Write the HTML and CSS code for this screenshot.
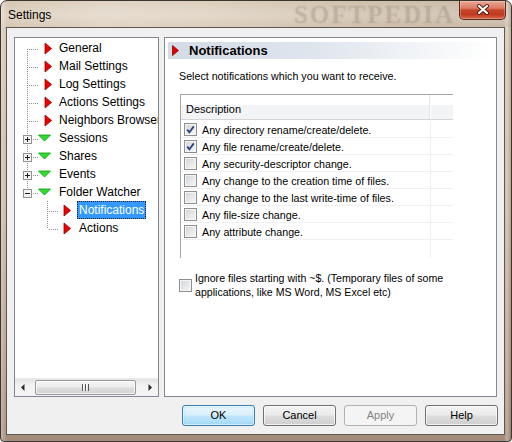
FILE: index.html
```html
<!DOCTYPE html>
<html>
<head>
<meta charset="utf-8">
<link rel="stylesheet" href="styles.css">
</head>
<body>
<div class="window">
  <div class="titlebar">
    <span class="title">Settings</span>
    <span class="watermark">SOFTPEDIA</span>
    <div class="close">
      <svg width="14" height="11" viewBox="0 0 14 11"><path d="M3 2 L11 9 M11 2 L3 9" stroke="#4a1d12" stroke-width="4" stroke-linecap="round"/><path d="M3 2 L11 9 M11 2 L3 9" stroke="#fff" stroke-width="2.2" stroke-linecap="round"/></svg>
    </div>
  </div>
  <div class="client">
    <div class="panes">
      <div class="tree">
        <div class="tree-rows">
          <div class="node"><span class="guide first"></span><span class="icon"><svg width="16" height="18"><polygon points="7,4 13.5,9.5 7,15" class="tri-red"/></svg></span><span class="label">General</span></div>
          <div class="node"><span class="guide mid"></span><span class="icon"><svg width="16" height="18"><polygon points="7,4 13.5,9.5 7,15" class="tri-red"/></svg></span><span class="label">Mail Settings</span></div>
          <div class="node"><span class="guide mid"></span><span class="icon"><svg width="16" height="18"><polygon points="7,4 13.5,9.5 7,15" class="tri-red"/></svg></span><span class="label">Log Settings</span></div>
          <div class="node"><span class="guide mid"></span><span class="icon"><svg width="16" height="18"><polygon points="7,4 13.5,9.5 7,15" class="tri-red"/></svg></span><span class="label">Actions Settings</span></div>
          <div class="node"><span class="guide mid"></span><span class="icon"><svg width="16" height="18"><polygon points="7,4 13.5,9.5 7,15" class="tri-red"/></svg></span><span class="label">Neighbors Browser</span></div>
          <div class="node"><span class="guide mid"><svg class="box" width="9" height="9"><rect x="0.5" y="0.5" width="8" height="8" fill="#f4f4f4" stroke="#919191"/><path d="M2 4.5 H7 M4.5 2 V7" stroke="#1f1f1f"/></svg></span><span class="icon"><svg width="16" height="18"><polygon points="0.5,6 12.5,6 6.5,12" class="tri-green"/></svg></span><span class="label">Sessions</span></div>
          <div class="node"><span class="guide mid"><svg class="box" width="9" height="9"><rect x="0.5" y="0.5" width="8" height="8" fill="#f4f4f4" stroke="#919191"/><path d="M2 4.5 H7 M4.5 2 V7" stroke="#1f1f1f"/></svg></span><span class="icon"><svg width="16" height="18"><polygon points="0.5,6 12.5,6 6.5,12" class="tri-green"/></svg></span><span class="label">Shares</span></div>
          <div class="node"><span class="guide mid"><svg class="box" width="9" height="9"><rect x="0.5" y="0.5" width="8" height="8" fill="#f4f4f4" stroke="#919191"/><path d="M2 4.5 H7 M4.5 2 V7" stroke="#1f1f1f"/></svg></span><span class="icon"><svg width="16" height="18"><polygon points="0.5,6 12.5,6 6.5,12" class="tri-green"/></svg></span><span class="label">Events</span></div>
          <div class="node"><span class="guide last"><svg class="box" width="9" height="9"><rect x="0.5" y="0.5" width="8" height="8" fill="#f4f4f4" stroke="#919191"/><path d="M2 4.5 H7" stroke="#1f1f1f"/></svg></span><span class="icon"><svg width="16" height="18"><polygon points="0.5,6 12.5,6 6.5,12" class="tri-green"/></svg></span><span class="label">Folder Watcher</span></div>
          <div class="node"><span class="indent"></span><span class="guide mid"></span><span class="icon"><svg width="16" height="18"><polygon points="6,4 12.5,9.5 6,15" class="tri-red"/></svg></span><span class="label selected">Notifications</span></div>
          <div class="node"><span class="indent"></span><span class="guide last"></span><span class="icon"><svg width="16" height="18"><polygon points="6,4 12.5,9.5 6,15" class="tri-red"/></svg></span><span class="label">Actions</span></div>
        </div>
        <div class="hscroll">
          <span class="sbtn"><svg width="17" height="17"><polygon points="9.5,5 9.5,12 6,8.5" fill="#2a2a2a"/></svg></span>
          <span class="track"><span class="thumb"><span class="grip"></span></span></span>
          <span class="sbtn"><svg width="17" height="17"><polygon points="7.5,5 7.5,12 11,8.5" fill="#2a2a2a"/></svg></span>
        </div>
      </div>
      <div class="page">
        <div class="band">
          <svg width="7" height="11"><polygon points="0.5,0.5 6.5,5.5 0.5,10.5" fill="#e00000" stroke="#a00000" stroke-width="0.8"/></svg>
          <span class="band-title">Notifications</span>
        </div>
        <p class="intro">Select notifications which you want to receive.</p>
        <div class="list">
          <div class="list-head">
            <span class="hcell">Description</span>
            <span class="hcell rest"></span>
          </div>
          <div class="rows">
            <div class="row"><span class="cell"><span class="cb"><svg width="11" height="11"><path d="M2.2 5.6 L4.4 8.2 L8.8 2.4" stroke="#2f437c" stroke-width="1.8" fill="none"/></svg></span><span class="txt">Any directory rename/create/delete.</span></span><span class="cell2"></span></div>
            <div class="row"><span class="cell"><span class="cb"><svg width="11" height="11"><path d="M2.2 5.6 L4.4 8.2 L8.8 2.4" stroke="#2f437c" stroke-width="1.8" fill="none"/></svg></span><span class="txt">Any file rename/create/delete.</span></span><span class="cell2"></span></div>
            <div class="row"><span class="cell"><span class="cb"></span><span class="txt">Any security-descriptor change.</span></span><span class="cell2"></span></div>
            <div class="row"><span class="cell"><span class="cb"></span><span class="txt">Any change to the creation time of files.</span></span><span class="cell2"></span></div>
            <div class="row"><span class="cell"><span class="cb"></span><span class="txt">Any change to the last write-time of files.</span></span><span class="cell2"></span></div>
            <div class="row"><span class="cell"><span class="cb"></span><span class="txt">Any file-size change.</span></span><span class="cell2"></span></div>
            <div class="row"><span class="cell"><span class="cb"></span><span class="txt">Any attribute change.</span></span><span class="cell2"></span></div>
            <div class="row empty"><span class="cell"></span><span class="cell2"></span></div>
          </div>
        </div>
        <div class="ignore">
          <span class="cb"></span>
          <span class="ignore-txt">Ignore files starting with ~$. (Temporary files of some<br>applications, like MS Word, MS Excel etc)</span>
        </div>
      </div>
    </div>
    <div class="buttons">
      <span class="btn default">OK</span>
      <span class="btn">Cancel</span>
      <span class="btn disabled">Apply</span>
      <span class="btn">Help</span>
    </div>
  </div>
</div>
</body>
</html>
```

FILE: styles.css
```css
html, body {
  margin: 0;
  padding: 0;
}
body {
  width: 512px;
  height: 442px;
  overflow: hidden;
  font-family: "Liberation Sans", Arial, sans-serif;
  background: #fff;
}
.window {
  box-sizing: border-box;
  width: 512px;
  height: 442px;
  border: 1px solid #3c3633;
  border-radius: 7px 7px 4px 4px;
  overflow: hidden;
  padding: 0 6px 6px 5px;
  display: flex;
  flex-direction: column;
  background:
    linear-gradient(to right, rgba(255,255,255,0.35), rgba(255,255,255,0) 6px, rgba(255,255,255,0) 503px, rgba(255,255,255,0.3) 506px, rgba(80,60,50,0.15)),
    linear-gradient(to bottom, #d6c6b1 0, #dfd3c3 14px, #d4c3ae 28px, #c8b5a2 45%, #b49c8b 80%, #a48a79 100%);
}
.titlebar {
  height: 26px;
  display: flex;
  align-items: flex-start;
  background: linear-gradient(to right, rgba(255,255,255,0) 0, rgba(255,255,255,0.25) 20%, rgba(255,255,255,0.15) 40%, rgba(0,0,0,0.03) 70%, rgba(0,0,0,0.06) 100%);
  margin: 0 -6px 0 -5px;
  padding: 0 6px 0 5px;
}
.title {
  font-size: 12px;
  line-height: 16px;
  margin: 6px 0 0 2px;
  color: #000;
}
.watermark {
  margin-left: auto;
  margin-right: 4px;
  margin-top: 1px;
  font-family: "Liberation Serif", serif;
  font-weight: bold;
  font-size: 25px;
  line-height: 25px;
  letter-spacing: 2px;
  color: rgba(110, 90, 70, 0.11);
  text-shadow: 0 0 2px rgba(110, 90, 70, 0.15);
}
.close {
  box-sizing: border-box;
  width: 47px;
  height: 19px;
  margin-right: -1px;
  border: 1px solid #5a2a20;
  border-top: none;
  border-radius: 0 0 5px 5px;
  background: linear-gradient(to bottom, #e9a898 0, #dc7a62 40%, #c8452a 50%, #c23a20 75%, #d56a4d 100%);
  box-shadow: inset 0 0 0 1px rgba(255,255,255,0.25);
  display: flex;
  align-items: center;
  justify-content: center;
}
.close svg {
  margin-top: -1px;
}
.client {
  flex: 1;
  border: 1px solid #5e5752;
  background: #f0f0f0;
  padding: 9px 7px 8px 7px;
  display: flex;
  flex-direction: column;
  gap: 8px;
}
.panes {
  height: 360px;
  display: flex;
  gap: 5px;
}
.tree {
  box-sizing: border-box;
  width: 145px;
  height: 360px;
  border: 1px solid #828790;
  background: #fff;
  display: flex;
  flex-direction: column;
}
.tree-rows {
  flex: 1;
  overflow: hidden;
  padding-top: 1px;
}
.node {
  display: flex;
  align-items: flex-start;
  height: 18px;
  white-space: nowrap;
}
.indent {
  width: 20px;
  height: 18px;
  flex: none;
}
.guide {
  --dv: repeating-linear-gradient(to bottom, #8c8c8c 0 1px, transparent 1px 2px);
  --dh: repeating-linear-gradient(to right, #8c8c8c 0 1px, transparent 1px 2px);
  width: 23px;
  height: 18px;
  flex: none;
  display: flex;
  align-items: flex-start;
}
.guide.mid {
  background: var(--dv) 12px 0 / 1px 18px no-repeat, var(--dh) 14px 10px / 9px 1px no-repeat;
}
.guide.first {
  background: var(--dv) 12px 10px / 1px 8px no-repeat, var(--dh) 14px 10px / 9px 1px no-repeat;
}
.guide.last {
  background: var(--dv) 12px 0 / 1px 10px no-repeat, var(--dh) 14px 10px / 9px 1px no-repeat;
}
.box {
  margin: 6px 0 0 8px;
  display: block;
}
.icon {
  width: 16px;
  height: 18px;
  flex: none;
}
.icon svg {
  display: block;
}
.tri-red {
  fill: #ee0000;
  stroke: #9c0000;
  stroke-width: 0.8;
}
.tri-green {
  fill: #2fdc2f;
  stroke: #0b9a0b;
  stroke-width: 0.8;
}
.label {
  margin-left: 3px;
  padding: 0 1px;
  border: 1px solid transparent;
  font-size: 12px;
  line-height: 16px;
  color: #000;
}
.label.selected {
  background: #3399ff;
  color: #fff;
  border: 1px dotted #1a1a1a;
}
.hscroll {
  height: 17px;
  flex: none;
  display: flex;
  background: linear-gradient(to bottom, #e3e3e3, #f3f3f3 40%, #f3f3f3);
  border-top: 1px solid #ececec;
}
.sbtn {
  width: 17px;
  height: 17px;
  flex: none;
}
.sbtn svg {
  display: block;
}
.track {
  flex: 1;
  display: flex;
  align-items: center;
}
.thumb {
  box-sizing: border-box;
  margin-left: 3px;
  width: 101px;
  height: 15px;
  border: 1px solid #999;
  border-radius: 2px;
  background: linear-gradient(to bottom, #f6f6f6 0, #ececec 45%, #dcdcdc 55%, #d3d3d3 100%);
  box-shadow: inset 0 0 0 1px rgba(255,255,255,0.7);
  display: flex;
  align-items: center;
  justify-content: center;
}
.grip {
  width: 7px;
  height: 7px;
  background: repeating-linear-gradient(to right, #555 0 1px, #fff 1px 2px, transparent 2px 3px);
}
.page {
  box-sizing: border-box;
  width: 333px;
  height: 360px;
  border: 1px solid #828790;
  background: #fff;
  padding-top: 4px;
}
.band {
  margin: 0 5px 0 3px;
  height: 17px;
  display: flex;
  align-items: center;
  padding-left: 4px;
  background: linear-gradient(to right, #d3dbe6 0, #dfe5ed 45%, #f3f5f8 80%, #ffffff 100%);
}
.band svg {
  display: block;
}
.band-title {
  margin-left: 10px;
  font-weight: bold;
  font-size: 13px;
  line-height: 17px;
  color: #000;
}
.intro {
  margin: 11px 0 0 14px;
  font-size: 10.7px;
  line-height: 13px;
  color: #000;
}
.list {
  margin: 11px 0 0 15px;
  width: 272px;
  border-top: 1px solid #a5a5a5;
  border-left: 1px solid #a5a5a5;
}
.list-head {
  display: grid;
  grid-template-columns: 249px 1fr;
  height: 25px;
  box-sizing: border-box;
  border-bottom: 1px solid #d5d5d5;
  background: linear-gradient(to bottom, #ffffff 0, #ffffff 40%, #f3f4f6 40%, #f3f4f6 100%);
}
.hcell {
  font-size: 11px;
  line-height: 20px;
  padding: 4px 0 0 5px;
  border-right: 1px solid #e3e4e6;
  box-shadow: 1px 0 0 #fff;
  color: #000;
}
.hcell.rest {
  border-right: none;
  box-shadow: none;
}
.rows {
  padding-top: 1px;
}
.row {
  display: grid;
  grid-template-columns: 250px 1fr;
  height: 17px;
  box-sizing: border-box;
  border-bottom: 1px solid #f0f0f0;
}
.row.empty {
  border-bottom: none;
  height: 18px;
}
.cell {
  display: flex;
  align-items: flex-start;
  padding-left: 3px;
  border-right: 1px solid #f0f0f0;
  white-space: nowrap;
  overflow: hidden;
}
.cb {
  box-sizing: border-box;
  width: 13px;
  height: 13px;
  flex: none;
  border: 1px solid #8e8f8f;
  background: linear-gradient(135deg, #d0d3d7 0, #e4e6e8 50%, #f7f7f7 100%);
  box-shadow: inset 0 0 0 1px #f6f6f6;
  display: flex;
  align-items: center;
  justify-content: center;
}
.cb svg {
  display: block;
}
.cell .cb {
  margin-top: 2px;
}
.txt {
  margin-left: 5px;
  font-size: 10.7px;
  line-height: 16px;
  padding-top: 1px;
  color: #000;
}
.ignore {
  margin: 13px 0 0 14px;
  display: flex;
  align-items: center;
  gap: 3px;
}
.ignore-txt {
  font-size: 10.6px;
  line-height: 14px;
  color: #000;
}
.buttons {
  display: flex;
  justify-content: flex-end;
  gap: 8px;
  margin-right: -1px;
}
.btn {
  box-sizing: border-box;
  width: 73px;
  height: 21px;
  border: 1px solid #707070;
  border-radius: 3px;
  background: linear-gradient(to bottom, #f2f2f2 0, #ebebeb 48%, #dddddd 52%, #cfcfcf 100%);
  box-shadow: inset 0 0 0 1px rgba(255,255,255,0.7);
  font-size: 11px;
  line-height: 19px;
  text-align: center;
  color: #000;
}
.btn.default {
  border-color: #3c7fb1;
  background: linear-gradient(to bottom, #eaf6fd 0, #d9f0fc 48%, #bee6fd 52%, #a7d9f5 100%);
  box-shadow: inset 0 0 0 1px rgba(255,255,255,0.6), inset 0 0 2px 1px rgba(72,196,255,0.35);
}
.btn.disabled {
  border-color: #adb2b5;
  background: #f4f4f4;
  box-shadow: none;
  color: #838383;
}
```
